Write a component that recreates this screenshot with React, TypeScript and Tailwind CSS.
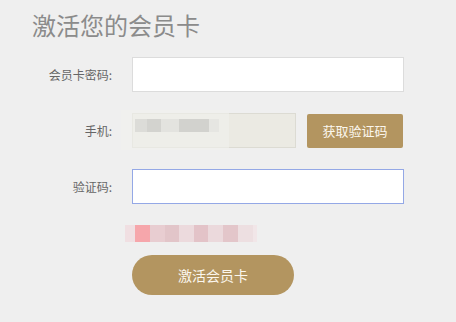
export default function App() {
  const font = { fontFamily: '"Microsoft YaHei", "Noto Sans CJK SC", sans-serif' };
  return (
    <div
      className="w-[456px] h-[322px] bg-[#efefef] overflow-hidden"
      style={font}
    >
      <h1 className="pl-[32px] pt-[9px] text-[24px] leading-[32px] text-[#8b8b8b] font-normal">
        激活您的会员卡
      </h1>

      <div className="mt-[16px] flex flex-col gap-[21px]">
        <div className="flex items-center">
          <label className="w-[112px] text-right text-[12px] text-[#666]">会员卡密码:</label>
          <input
            type="text"
            className="ml-[20px] w-[272px] h-[35px] bg-white border border-[#dcdcdc] outline-none"
          />
        </div>

        <div className="flex items-center">
          <label className="w-[112px] text-right text-[12px] text-[#666]">手机:</label>
          <div className="relative ml-[20px] w-[164px] h-[35px] bg-[#ebeae3] border border-[#dcdbd3]">
            <div className="absolute left-[-12px] top-[-4px] w-[108px] h-[40px] bg-[#f0f0ec] opacity-60" />
            <div className="absolute left-[2px] top-[5px] flex h-[13px]">
              <div className="w-[12px] bg-[#dcdcd8]" />
              <div className="w-[14px] bg-[#d3d3cf]" />
              <div className="w-[18px] bg-[#e3e3df]" />
              <div className="w-[30px] bg-[#d2d2ce]" />
              <div className="w-[10px] bg-[#e6e6e2]" />
            </div>
          </div>
          <button className="ml-[11px] w-[96px] h-[34px] rounded-[2px] bg-[#b39560] text-[#fbf7ee] text-[13px]">
            获取验证码
          </button>
        </div>

        <div className="flex items-center">
          <label className="w-[112px] text-right text-[12px] text-[#666]">验证码:</label>
          <input
            type="text"
            className="ml-[20px] w-[272px] h-[35px] bg-white border border-[#94a8e6] outline-none"
          />
        </div>
      </div>

      <div className="ml-[125px] mt-[21px] w-[132px] h-[17px] flex bg-[#f1e6e8]">
        <div className="w-[10px] bg-[#f0dfe2]" />
        <div className="w-[15px] bg-[#f6a6ab]" />
        <div className="w-[15px] bg-[#e8cdd1]" />
        <div className="w-[14px] bg-[#e2c5c9]" />
        <div className="w-[15px] bg-[#ecdadd]" />
        <div className="w-[14px] bg-[#e3c3c8]" />
        <div className="w-[15px] bg-[#ebd9dc]" />
        <div className="w-[15px] bg-[#e3c6ca]" />
        <div className="w-[15px] bg-[#eddfe1]" />
      </div>

      <button className="ml-[132px] mt-[13px] w-[162px] h-[40px] rounded-full bg-[#b39560] text-[#fbf7ee] text-[14px]">
        激活会员卡
      </button>
    </div>
  );
}
